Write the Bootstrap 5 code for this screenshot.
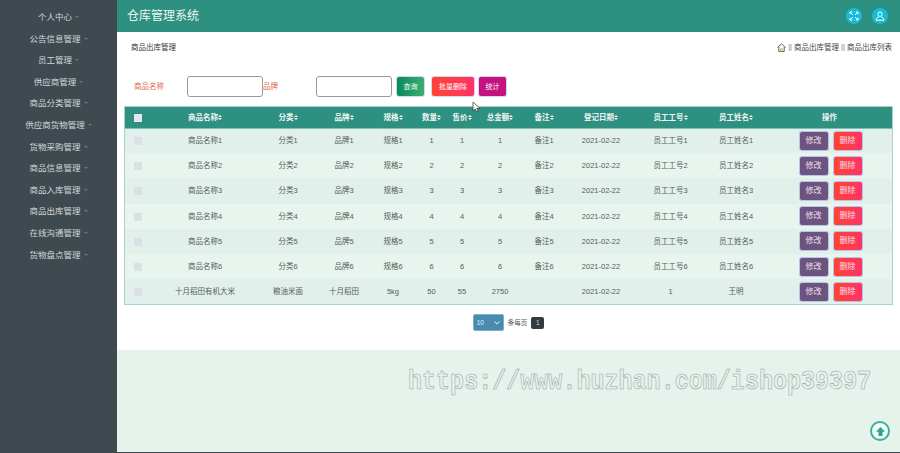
<!DOCTYPE html>
<html lang="zh-CN">
<head>
  <meta charset="UTF-8" />
  <meta name="viewport" content="width=device-width, initial-scale=1.0"/>
  <title>仓库管理系统</title>
  <link href="https://cdn.jsdelivr.net/npm/bootstrap@5.3.2/dist/css/bootstrap.min.css" rel="stylesheet" />
  <style>
    html, body { height: 453px; overflow: hidden; }
    body { font-family: "Liberation Sans", "Noto Sans CJK SC", sans-serif; background: #e6f2ec; color: #555; }
    .app-shell { height: 453px; border-bottom: 1px solid #3f4a50; position: relative; }
    .side-menu { width: 117px; flex: none; background: #3f4a50; padding-top: 7px; }
    .side-item { height: 21.6px; line-height: 21.6px; font-size: 8.5px; color: #d3d6d8; text-align: center; }
    .side-item::after { content: ""; display: inline-block; margin-left: 3px; vertical-align: 2px; border: 2px solid transparent; border-top: 2px solid #6b757b; border-bottom: 0; }
    .top-bar { height: 32px; background: #2e9080; color: #eef7f4; padding: 0 12px 0 10px; }
    .top-title { font-size: 12px; }
    .icon-gap { gap: 10px; }
    .round-icon { width: 16px; height: 16px; border-radius: 50%; background: #17bcd6; }
    .panel-white { background: #fff; height: 318px; padding: 0 7px; }
    .crumb-row { height: 31px; padding: 0 1px 0 7px; font-size: 7.5px; color: #444; }
    .crumb-title { font-size: 7.5px; color: #333; }
    .crumb-sep { color: #a4a9b8; margin: 0 2px; font-size: 7px; font-weight: 700; }
    .search-row { margin-top: 13px; height: 21px; }
    .search-label { font-size: 7.5px; color: #e0684e; }
    .search-input { width: 76px; height: 21px; padding: 0 4px; border: 1px solid #999; border-radius: 3px; background: #fff; }
    .act-btn { height: 21px; padding: 0; font-size: 7px; color: #fff; border: 1px solid #cfd8ef; border-radius: 3px; line-height: 1; }
    .grad-green { background: linear-gradient(90deg, #078a5b, #3cae70); width: 29px; }
    .grad-red { background: linear-gradient(90deg, #ff4433, #ff3366); }
    .solid-pink { background: #c4127f; width: 29px; }
    .data-wrap { margin-top: 9px; border: 1px solid #a9d2cd; }
    .data-grid { table-layout: fixed; width: 100%; margin: 0; font-size: 7.5px; text-align: center; }
    .data-grid th, .data-grid td { padding: 0; border: 0; vertical-align: middle; color: inherit; background: transparent; box-shadow: none; }
    .data-grid th:first-child, .data-grid td:first-child { padding-right: 2px; }
    .data-grid thead tr { height: 21px; background: #2e9080; color: #f0f7f5; border-bottom: 1px solid #80bdb2; }
    .data-grid th { font-weight: 700; font-size: 7.5px; color: #f0f7f5; }
    .data-grid tbody tr { height: 25.2px; color: #545d5a; }
    .data-grid tbody tr:nth-child(odd) { background: #e2f0eb; }
    .data-grid tbody tr:nth-child(even) { background: #e8f5ef; }
    .sort-mark { display: inline-flex; flex-direction: column; vertical-align: middle; }
    .sort-mark::before, .sort-mark::after { content: ""; border-left: 2px solid transparent; border-right: 2px solid transparent; }
    .sort-mark::before { border-bottom: 2px solid #f0f7f5; margin-bottom: 1px; }
    .sort-mark::after { border-top: 2px solid #f0f7f5; }
    .tick-box { display: inline-block; width: 8px; height: 8px; background: #dcdfe6; vertical-align: middle; }
    .tick-head { background: #e3e6ea; }
    .row-tools { gap: 4px; padding-left: 2px; }
    .row-btn { width: 30px; height: 20px; padding: 0; font-size: 8px; line-height: 1; color: #f2dfe6; border: 1px solid #b9c3e6; border-radius: 3px; }
    .row-edit { background: #6b5480; }
    .page-row { margin-top: 9px; font-size: 6.5px; color: #555; }
    .page-select { width: 31px; height: 17px; background: #4a8cb0; color: #e8f2f7; border-radius: 2px; padding: 0 3px; border: 1px solid #7fb0c9; }
    .page-select svg { display: block; }
    .page-num { width: 13px; height: 12px; border-radius: 2px; background: #343a40; color: #ddd; line-height: 1; }
    .watermark { position: absolute; left: 408px; top: 365px; font-family: "Liberation Mono", monospace; font-weight: 700; font-size: 23.4px; line-height: 34px; color: #e6f2ec; -webkit-text-stroke: 0.5px #9aa19f; white-space: nowrap; opacity: .99; transform: scaleY(1.15); transform-origin: 0 50%; }
    .to-top { position: absolute; left: 870px; top: 421px; width: 20px; height: 20px; border: 2px solid #35b39a; border-radius: 50%; background: #f4f8f6; }
    .mouse-mark { position: absolute; left: 472px; top: 101px; }
  </style>
</head>
<body>
  <div class="app-shell d-flex">
    <div class="side-menu" id="sideMenu"></div>

    <div class="flex-grow-1 d-flex flex-column">
      <div class="top-bar d-flex align-items-center justify-content-between">
        <div class="top-title">仓库管理系统</div>
        <div class="d-flex icon-gap align-items-center">
          <div class="round-icon d-flex align-items-center justify-content-center">
            <svg width="10" height="10" viewBox="0 0 10 10" fill="none" stroke="#fff" stroke-width="1"><path d="M1 1h2.2M1 1v2.2M1 1l3 3M9 1H6.8M9 1v2.2M9 1L6 4M1 9h2.2M1 9V6.8M1 9l3-3M9 9H6.8M9 9V6.8M9 9L6 6"/></svg>
          </div>
          <div class="round-icon d-flex align-items-center justify-content-center">
            <svg width="10" height="10" viewBox="0 0 10 10" fill="none" stroke="#fff" stroke-width="1"><circle cx="5" cy="3.2" r="2.2"/><path d="M1 9.2c.3-2.4 1.8-3 2.8-3.2M9 9.2c-.3-2.4-1.8-3-2.8-3.2M1 9.2h8"/></svg>
          </div>
        </div>
      </div>

      <div class="panel-white">
        <div class="crumb-row d-flex align-items-center justify-content-between">
          <span class="crumb-title">商品出库管理</span>
          <span class="d-flex align-items-center">
            <svg width="9" height="9" viewBox="0 0 10 10" fill="none" stroke="#555" stroke-width="1"><path d="M.5 5 5 1l4.500 4M2 4.500V9.500h6V4.500"/><path d="M4 9.500V6.500h2v3" stroke="#c9a24f"/></svg>
            <span class="crumb-sep">||</span>商品出库管理<span class="crumb-sep">||</span>商品出库列表
          </span>
        </div>

        <div class="search-row d-flex align-items-center">
          <span class="search-label" style="width:53px;margin-left:10px">商品名称</span>
          <input class="search-input" type="text" />
          <span class="search-label" style="width:53px">品牌</span>
          <input class="search-input" type="text" />
          <button class="btn act-btn grad-green ms-1" type="button">查询</button>
          <button class="btn act-btn grad-red" style="width:44px;margin-left:6px" type="button">批量删除</button>
          <button class="btn act-btn solid-pink" style="margin-left:3px" type="button">统计</button>
        </div>

        <div class="data-wrap">
          <table class="table data-grid">
            <colgroup>
              <col style="width:28px"><col style="width:104px"><col style="width:62px"><col style="width:50px"><col style="width:48px"><col style="width:29px"><col style="width:32px"><col style="width:44px"><col style="width:44px"><col style="width:70px"><col style="width:69px"><col style="width:62px"><col>
            </colgroup>
            <thead>
              <tr>
                <th><span class="tick-box tick-head"></span></th>
                <th>商品名称<span class="sort-mark"></span></th>
                <th>分类<span class="sort-mark"></span></th>
                <th>品牌<span class="sort-mark"></span></th>
                <th>规格<span class="sort-mark"></span></th>
                <th>数量<span class="sort-mark"></span></th>
                <th>售价<span class="sort-mark"></span></th>
                <th>总金额<span class="sort-mark"></span></th>
                <th>备注<span class="sort-mark"></span></th>
                <th>登记日期<span class="sort-mark"></span></th>
                <th>员工工号<span class="sort-mark"></span></th>
                <th>员工姓名<span class="sort-mark"></span></th>
                <th>操作</th>
              </tr>
            </thead>
            <tbody id="stockRows"></tbody>
          </table>
        </div>

        <div class="page-row d-flex align-items-center justify-content-center">
          <div class="page-select d-flex align-items-center justify-content-between">
            <span>10</span>
            <svg width="6" height="4" viewBox="0 0 6 4" fill="none" stroke="#e8f2f7" stroke-width="1"><path d="M.5.500 3 3 5.500.500"/></svg>
          </div>
          <span class="mx-1">条每页</span>
          <span class="page-num d-flex align-items-center justify-content-center">1</span>
        </div>
      </div>
    </div>

    <div class="watermark">https://www.huzhan.com/ishop39397</div>
    <svg class="mouse-mark" width="9" height="12" viewBox="0 0 9 12"><path d="M1 1v9l2.200-2 1.500 3 1.500-.7-1.500-2.800H8z" fill="#fff" stroke="#444" stroke-width=".8"/></svg>
    <div class="to-top d-flex align-items-center justify-content-center">
      <svg width="11" height="11" viewBox="0 0 11 11"><path d="M5.500 1 10 5.800H7.500V10h-4V5.800H1z" fill="#2aa58c"/></svg>
    </div>
  </div>

  <script>
    const menuNames = ["个人中心", "公告信息管理", "员工管理", "供应商管理", "商品分类管理", "供应商货物管理", "货物采购管理", "商品信息管理", "商品入库管理", "商品出库管理", "在线沟通管理", "货物盘点管理"];
    document.getElementById("sideMenu").innerHTML = menuNames.map(name => `<div class="side-item">${name}</div>`).join("");

    const rows = [1, 2, 3, 4, 5, 6].map(n => [`商品名称${n}`, `分类${n}`, `品牌${n}`, `规格${n}`, n, n, n, `备注${n}`, "2021-02-22", `员工工号${n}`, `员工姓名${n}`]);
    rows.push(["十月稻田有机大米", "粮油米面", "十月稻田", "5kg", 50, 55, 2750, "", "2021-02-22", 1, "王明"]);

    document.getElementById("stockRows").innerHTML = rows.map(cells => `
      <tr>
        <td><span class="tick-box"></span></td>
        ${cells.map(c => `<td>${c}</td>`).join("")}
        <td>
          <div class="d-flex justify-content-center row-tools">
            <button class="btn row-btn row-edit" type="button">修改</button>
            <button class="btn row-btn grad-red" type="button">删除</button>
          </div>
        </td>
      </tr>`).join("");
  </script>

  <script src="https://cdn.jsdelivr.net/npm/bootstrap@5.3.2/dist/js/bootstrap.bundle.min.js"></script>
</body>
</html>
